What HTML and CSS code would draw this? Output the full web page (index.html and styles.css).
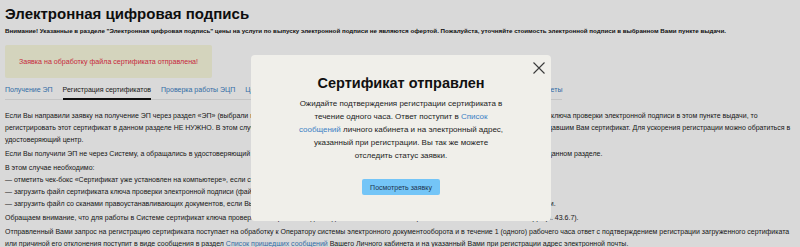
FILE: index.html
```html
<!DOCTYPE html>
<html>
<head>
    <title>Электронная цифровая подпись</title>
    <link rel="stylesheet" href="styles.css">
</head>
<body>
    <div class="page">
        <!-- заголовок -->
        <h1 class="title">Электронная цифровая подпись</h1>
        <p class="warning">Внимание! Указанные в разделе "Электронная цифровая подпись" цены на услуги по выпуску электронной подписи не являются офертой. Пожалуйста, уточняйте стоимость электронной подписи в выбранном Вами пункте выдачи.</p>

        <!-- уведомление -->
        <div class="notice">Заявка на обработку файла сертификата отправлена!</div>

        <!-- вкладки -->
        <div class="tabs">
            <a href="#">Получение ЭП</a>
            <a href="#" class="active">Регистрация сертификатов</a>
            <a href="#">Проверка работы ЭЦП</a>
            <a href="#">Центры выдачи</a>
            <a href="#">Удостоверяющие центры</a>
            <a href="#">Инструкции</a>
            <a href="#">Стоимость ЭП</a>
            <a href="#">Вопросы и ответы</a>
        </div>

        <!-- текст -->
        <div class="content">
            <p>Если Вы направили заявку на получение ЭП через раздел «ЭП» (выбрали пункт выдачи, оплатили услугу по выпуску ЭП и своевременно лично получили сертификат ключа проверки электронной подписи в этом пункте выдачи, то<br>
                регистрировать этот сертификат в данном разделе НЕ НУЖНО. В этом случае регистрация сертификата будет сделана автоматически удостоверяющим центром, выдавшим Вам сертификат. Для ускорения регистрации можно обратиться в<br>
                удостоверяющий центр.</p>
            <p>Если Вы получили ЭП не через Систему, а обращались в удостоверяющий центр самостоятельно, то такой сертификат необходимо обязательно зарегистрировать в данном разделе.</p>
            <p>В этом случае необходимо:<br>
                — отметить чек-бокс «Сертификат уже установлен на компьютере», если сертификат уже установлен;<br>
                — загрузить файл сертификата ключа проверки электронной подписи (файл с расширением .cer);<br>
                — загрузить файл со сканами правоустанавливающих документов, если Вы являетесь представителем юридического лица и действуете от его имени по доверенности.</p>
            <p>Обращаем внимание, что для работы в Системе сертификат ключа проверки электронной подписи должен соответствовать требованиям Регламента системы ЭДО (п. 43.6.7).</p>
            <p>Отправленный Вами запрос на регистрацию сертификата поступает на обработку к Оператору системы электронного документооборота и в течение 1 (одного) рабочего часа ответ с подтверждением регистрации загруженного сертификата<br>
                или причиной его отклонения поступит в виде сообщения в раздел <a href="#">Список пришедших сообщений</a> Вашего Личного кабинета и на указанный Вами при регистрации адрес электронной почты.</p>
        </div>
    </div>

    <!-- окно -->
    <div class="overlay"></div>
    <div class="modal">
        <button class="close" aria-label="Закрыть">
            <svg width="12" height="12" viewBox="0 0 12 12"><path d="M0.5 0.5L11.5 11.5M11.5 0.5L0.5 11.5" stroke="#3a3a3a" stroke-width="1.1" fill="none"/></svg>
        </button>
        <h2>Сертификат отправлен</h2>
        <p>Ожидайте подтверждения регистрации сертификата в течение одного часа. Ответ поступит в <a href="#">Список сообщений</a> личного кабинета и на электронный адрес, указанный при регистрации. Вы так же можете отследить статус заявки.</p>
        <button class="btn">Посмотреть заявку</button>
    </div>
</body>
</html>
```
FILE: styles.css
```css
/* общие стили */
body {
    margin: 0;
    padding: 0;
    background-color: #fff;
    font-family: "Liberation Sans", Arial, sans-serif;
    color: #222;
}

a {
    color: #3b80c4;
    text-decoration: none;
}

.page {
    padding: 0 4px 0 5px;
}

.title {
    margin: 0;
    padding-top: 4px;
    font-size: 15px;
    line-height: 19px;
    color: #111;
}

.warning {
    margin: 3px 0 0;
    font-size: 6.2px;
    font-weight: bold;
    line-height: 10px;
    color: #111;
}

.notice {
    width: 207px;
    height: 33px;
    margin-top: 9px;
    box-sizing: border-box;
    display: flex;
    align-items: center;
    justify-content: center;
    background-color: #f9f9de;
    border-radius: 2px;
    color: #ea3048;
    font-size: 7.1px;
}

.tabs {
    display: inline-flex;
    gap: 10px;
    margin-top: 1px;
    border-bottom: 1px solid #e8e8e8;
    font-size: 7px;
}

.tabs a {
    padding: 4px 0 5px;
    border-bottom: 2px solid transparent;
    margin-bottom: -1px;
    white-space: nowrap;
}

.tabs a.active {
    color: #222;
    border-bottom-color: #111;
}

.content {
    margin-top: 10px;
    font-size: 7px;
    line-height: 12px;
}

.content p {
    margin: 0 0 2px;
    white-space: nowrap;
}

/* модальное окно */
.overlay {
    position: fixed;
    inset: 0;
    background: rgba(0,0,0,0.15);
}

.modal {
    position: absolute;
    left: 251px;
    top: 55px;
    width: 300px;
    height: 166px;
    box-sizing: border-box;
    padding: 19px 45px 0;
    background-color: #f0efea;
    border-radius: 4px;
    text-align: center;
}

.modal h2 {
    margin: 0;
    font-size: 14.5px;
    line-height: 18px;
    color: #111;
}

.modal p {
    margin: 5px 0 0;
    font-size: 8px;
    line-height: 13px;
    color: #222;
}

.modal .close {
    position: absolute;
    top: 7px;
    right: 6px;
    padding: 0;
    border: none;
    background: none;
    line-height: 0;
}

.btn {
    margin-top: 17px;
    width: 78px;
    height: 16px;
    padding: 0;
    border: none;
    border-radius: 2px;
    background-color: #74c5f7;
    color: #1c3550;
    font-family: "Liberation Sans", Arial, sans-serif;
    font-size: 7px;
}
```
